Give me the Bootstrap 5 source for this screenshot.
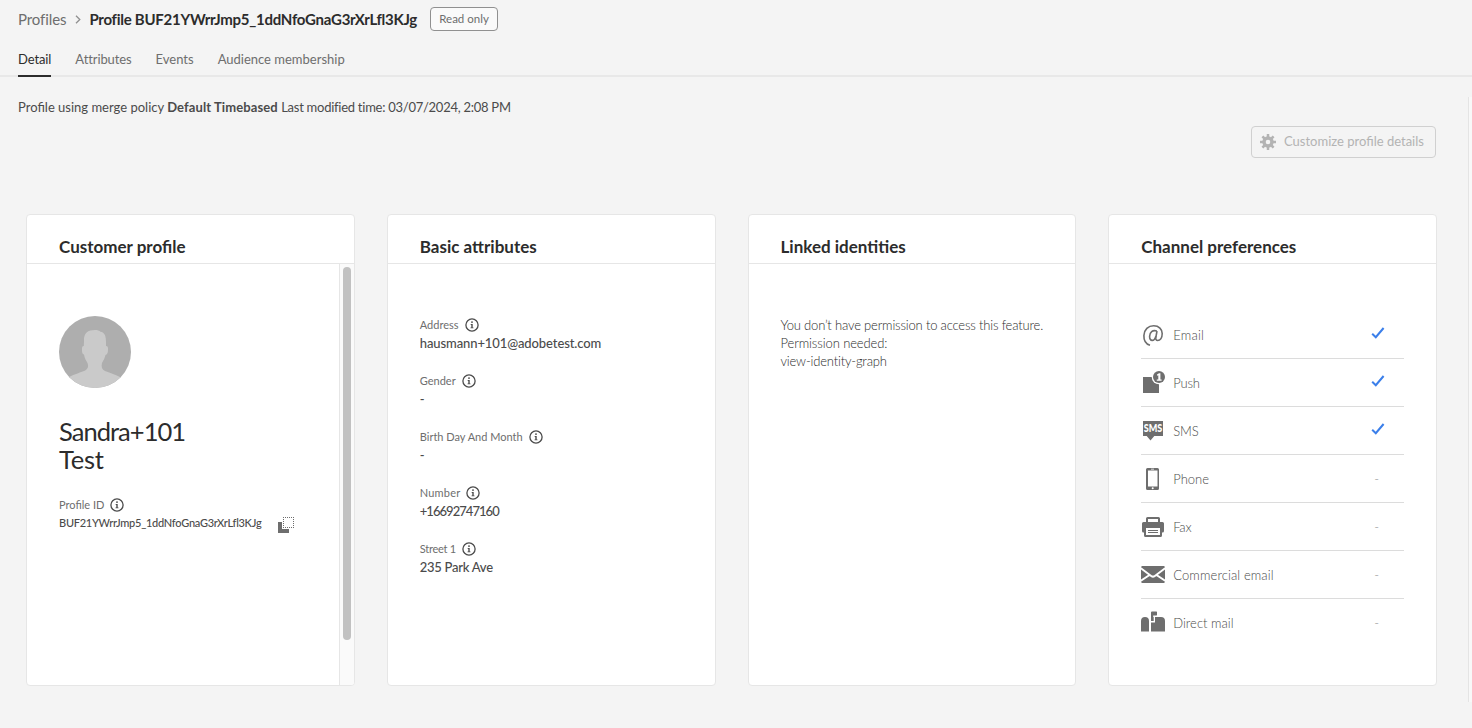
<!DOCTYPE html>
<html lang="en">
<head>
<meta charset="utf-8">
<meta name="viewport" content="width=device-width, initial-scale=1">
<title>Profile detail</title>
<link href="https://cdn.jsdelivr.net/npm/bootstrap@5.3.0/dist/css/bootstrap.min.css" rel="stylesheet">
<style>
body{background:#f4f4f4;color:#4b4b4b;font:400 13px/18px Lato,"Open Sans",sans-serif;height:728px;overflow:hidden}
svg{display:block;flex:none}
/* tracking */
.k-10{letter-spacing:-.96px}.k-6{letter-spacing:-.64px}.k-3{letter-spacing:-.26px}.k-2{letter-spacing:-.18px}.k-1{letter-spacing:-.1px}.k1{letter-spacing:.1px}.k2{letter-spacing:.2px}
.page-head{height:38px;padding-left:18px;font-size:15px}
.page-head a{color:#6e6e6e;text-decoration:none}
.page-head h1{font-size:15px;font-weight:700;line-height:20px;color:#2c2c2c;margin:0 13px 0 8px}
.crumb-sep{margin-left:9px}
.ro-tag{height:24px;width:68px;border:1px solid #909090;border-radius:4px;background:#fafafa;color:#6e6e6e;font-size:11.5px}
.tabs{height:39px;padding-left:18px;gap:24px;border-bottom:2px solid #e8e8e8}
.tabs .nav-link{padding:12px 0 0;height:39px;color:#6e6e6e;line-height:18px}
.tabs .nav-link.active{color:#2c2c2c;border-bottom:2px solid #2c2c2c}
.content{height:605px;margin-top:20px;width:1469px;border-right:1px solid #e4e4e4;padding:1px 31px 0 18px}
.side-fill{background:#f8f8f8;height:605px;margin-top:20px}
.actions{margin:10px 1px 0 0}
.btn-cust{--bs-btn-disabled-opacity:1;--bs-btn-disabled-color:#b3b3b3;--bs-btn-disabled-border-color:#d0d0d0;width:185px;height:32px;padding:0 8px;border-radius:4px;font-size:13px;gap:8px}
.cards{display:grid;grid-template-columns:repeat(4,1fr);gap:32px;margin:56px 0 0 8px}
.pcard{height:472px;border:1px solid #e6e6e6;border-radius:4px;background:#fff;overflow:hidden}
.pcard h2{font-size:17px;font-weight:700;line-height:20px;color:#2c2c2c;margin:0;height:49px;padding:22px 0 0 32px;border-bottom:1px solid #e6e6e6}
.pbody{padding:52px 32px 0;height:421px}
.fullname{font-size:25.5px;line-height:28px;color:#2c2c2c;margin-top:29px}
.lbl{font-size:11px;color:#6e6e6e;gap:6px}
.pid-label{margin-top:23px}
.pid{font-size:11px;font-weight:500}
.copy-ic{margin:3px 13px 0 0}
.track{width:15px;border-left:1px solid #e6e6e6;background:#fafafa;padding:3px 3px 0}
.thumb{width:8px;height:373px;border-radius:4px;background:#c1c1c1}
.field{height:56px}
.value{font-weight:500}
.notice{font-weight:300;color:#2c2c2c}
.prefs{padding-top:47px}
.pref{height:48px;border-bottom:1px solid #dcdcdc;font-weight:300;color:#4b4b4b}
.pref:last-child{border-bottom:0}
.pref svg.ic{margin-right:8px}
.no{color:#8e8e8e;margin-right:25px}
.yes{margin:-4px 19px 0 0}
</style>
</head>
<body>
<svg width="0" height="0" class="d-none">
<symbol id="info" viewBox="0 0 14 14"><circle cx="7" cy="7" r="6.1" fill="none" stroke="#4b4b4b" stroke-width="1.3"/><circle cx="7" cy="4.1" r=".95" fill="#4b4b4b"/><path d="M5.700 6h2v3.400h.8v.9H5.500v-.9h.8V6.900h-.6z" fill="#4b4b4b"/></symbol>
<symbol id="check" viewBox="0 0 14 14"><path d="M1.200 7.700 4.800 11.200 12.600 2" fill="none" stroke="#3b7fea" stroke-width="2"/></symbol>
</svg>
<header class="page-head d-flex align-items-center">
<a href="#" class="k-1">Profiles</a>
<svg class="crumb-sep" width="6" height="9" viewBox="0 0 6 9" fill="none" stroke="#909090" stroke-width="1.3"><path d="M1 .7 4.800 4.500 1 8.300"/></svg>
<h1 class="k-3">Profile BUF21YWrrJmp5_1ddNfoGnaG3rXrLfl3KJg</h1>
<span class="ro-tag d-flex align-items-center justify-content-center">Read only</span>
</header>
<nav class="tabs nav flex-nowrap">
<a class="nav-link active k-1" href="#">Detail</a><a class="nav-link k-1" href="#">Attributes</a><a class="nav-link" href="#">Events</a><a class="nav-link" href="#">Audience membership</a>
</nav>
<div class="d-flex">
<main class="content">
<p class="mb-0">Profile using merge policy <b class="k1">Default Timebased</b> <span class="k-3">Last modified time: 03/07/2024, 2:08 PM</span></p>
<div class="actions d-flex justify-content-end">
<button class="btn btn-cust d-flex align-items-center" disabled>
<svg width="16" height="16" viewBox="-8 -8 16 16" fill="none" stroke="#b3b3b3"><circle r="4" stroke-width="3.4"/><path stroke-width="2.5" d="M0-8v3M0 8V5M-8 0h3M8 0H5M-5.600-5.600-3.500-3.500M5.600 5.600 3.500 3.500M5.600-5.600 3.500-3.500M-5.600 5.600-3.500 3.500"/></svg>
<span class="text-nowrap">Customize profile details</span></button>
</div>
<section class="cards">
<article class="pcard">
<h2>Customer profile</h2>
<div class="d-flex">
<div class="pbody flex-grow-1">
<svg width="72" height="72" viewBox="0 0 72 72"><defs><clipPath id="round"><circle cx="36" cy="36" r="36"/></clipPath></defs><g clip-path="url(#round)"><path fill="#aeaeae" d="M0 0h72v72H0z"/><path fill="#cacaca" d="M25 25C24.500 17 29 14 36 14c2.500 0 4.500.6 5.500 1.800C45.500 16.200 47.400 20 47 28v2c2 0 2 1 2 4s-1 4.500-2.500 5C45.500 43 44.500 44 43 47c-1 4 0 6.500 3 8 6 2.400 10 3.500 16 6.500V72H10V61c6-3 10-4 15-6 3.500-1.500 5-4 3.500-8-1.500-3-3-4.500-3.500-8.500C23.300 38 23 36.500 23 34s0-4 1.800-4z"/></g></svg>
<div class="fullname"><div class="k-10">Sandra+101</div><div class="k-3">Test</div></div>
<div class="lbl pid-label d-flex align-items-center"><span>Profile ID</span><svg width="14" height="14"><use href="#info"/></svg></div>
<div class="d-flex"><span class="pid k-3">BUF21YWrrJmp5_1ddNfoGnaG3rXrLfl3KJg</span>
<svg class="copy-ic ms-auto" width="16" height="16" viewBox="0 0 16 16"><path fill="#6e6e6e" d="M0 5h4v7h7v4H0z"/><path fill="none" stroke="#6e6e6e" stroke-dasharray="1 1" d="M5 .5h11M5 10.500h11M5.500 0v11M15.500 0v11"/></svg></div>
</div>
<div class="track"><div class="thumb"></div></div>
</div>
</article>
<article class="pcard">
<h2>Basic attributes</h2>
<div class="pbody">
<div class="field"><div class="lbl d-flex align-items-center"><span>Address</span><svg width="14" height="14"><use href="#info"/></svg></div><div class="value k-1">hausmann+101@adobetest.com</div></div>
<div class="field"><div class="lbl d-flex align-items-center"><span>Gender</span><svg width="14" height="14"><use href="#info"/></svg></div><div class="value">-</div></div>
<div class="field"><div class="lbl d-flex align-items-center"><span>Birth Day And Month</span><svg width="14" height="14"><use href="#info"/></svg></div><div class="value">-</div></div>
<div class="field"><div class="lbl d-flex align-items-center"><span class="k2">Number</span><svg width="14" height="14"><use href="#info"/></svg></div><div class="value k-10">+16692747160</div></div>
<div class="field"><div class="lbl d-flex align-items-center"><span class="k-3">Street 1</span><svg width="14" height="14"><use href="#info"/></svg></div><div class="value k-3">235 Park Ave</div></div>
</div>
</article>
<article class="pcard">
<h2>Linked identities</h2>
<div class="pbody notice text-nowrap"><div class="k-2">You don’t have permission to access this feature.</div><div class="k-1">Permission needed:</div><div class="k-2">view-identity-graph</div></div>
</article>
<article class="pcard">
<h2>Channel preferences</h2>
<div class="pbody prefs">
<div class="pref d-flex align-items-center"><svg class="ic" width="24" height="24" viewBox="0 0 24 24" fill="none" stroke="#6e6e6e"><path stroke-width="1.6" d="M9 22.300C4.800 21 2.700 17 2.900 12.500 3.200 6.500 7.200 2.800 12.700 2.800 18 2.800 21.200 6.200 21.200 10.600c0 4.400-2.200 6.900-4.500 6.900-1.600 0-2.200-1.200-1.900-2.800L16 8"/><path stroke-width="1.6" d="M15.800 8c-4.300-1.400-7 1.300-7.200 5.200-.1 2.500.9 4.200 2.600 4.200 1.800 0 3-1.800 3.700-4.200"/></svg><span class="k2 me-auto">Email</span><svg class="yes" width="14" height="14"><use href="#check"/></svg></div>
<div class="pref d-flex align-items-center"><svg class="ic" width="24" height="24" viewBox="0 0 24 24"><path fill="#6e6e6e" d="M2 6h16v16H2z"/><circle cx="18" cy="6" r="7.300" fill="#fff"/><circle cx="18" cy="6" r="6" fill="#6e6e6e"/><path fill="#fff" d="M16 3.400 18 2.200h1.400v6.200h1.200v1.300H15.800V8.400h1.500V4.300L16 4.700z"/></svg><span class="k-2 me-auto">Push</span><svg class="yes" width="14" height="14"><use href="#check"/></svg></div>
<div class="pref d-flex align-items-center"><svg class="ic" width="24" height="24" viewBox="0 0 24 24"><path fill="#6e6e6e" d="M2 2h20v15h-8.700L9.500 21.500 5.700 17H2z"/><text x="12" y="13" text-anchor="middle" textLength="18.500" lengthAdjust="spacingAndGlyphs" font-size="10.500" font-weight="900" fill="#fff">SMS</text></svg><span class="k-2 me-auto">SMS</span><svg class="yes" width="14" height="14"><use href="#check"/></svg></div>
<div class="pref d-flex align-items-center"><svg class="ic" width="24" height="24" viewBox="0 0 24 24"><path fill="#6e6e6e" fill-rule="evenodd" d="M7 1h9.500A1.500 1.500 0 0 1 18 2.500v19a1.500 1.500 0 0 1-1.500 1.500h-10A1.500 1.500 0 0 1 5 21.500v-19A1.500 1.500 0 0 1 6.500 1zM7 3.500v16h9.500v-16zM10 1.800v.8h3v-.8zm1.700 18.500a1 1 0 1 0 .01 2 1 1 0 0 0 0-2z"/></svg><span class="me-auto">Phone</span><span class="no">-</span></div>
<div class="pref d-flex align-items-center"><svg class="ic" width="24" height="24" viewBox="0 0 24 24"><path fill="#6e6e6e" fill-rule="evenodd" d="M5 7V3.500Q5 2 6.500 2h11Q19 2 19 3.500V7h2.500Q23 7 23 8.500V16q0 1.500-1.500 1.500H21v3q0 1.500-1.500 1.500h-15Q3 22 3 20.500v-3h-.5Q1 17.500 1 16V8.500Q1 7 2.500 7zM7 4v3h10V4zM5 13v7h14v-7z"/><path stroke="#6e6e6e" d="M7 15.500h10M7 17.500h10"/></svg><span class="k-3 me-auto">Fax</span><span class="no">-</span></div>
<div class="pref d-flex align-items-center"><svg class="ic" width="24" height="24" viewBox="0 0 24 24"><path fill="#6e6e6e" d="M1 3h22l1 1v15l-1 1H1l-1-1V4z"/><path fill="none" stroke="#fff" stroke-width="2" d="M-.5 5 10.500 13.200q1.500 1 3 0L24.500 5M-.5 18l9-6M24.500 18l-9-6"/></svg><span class="k1 me-auto">Commercial email</span><span class="no">-</span></div>
<div class="pref d-flex align-items-center"><svg class="ic" width="24" height="24" viewBox="0 0 24 24"><path fill="#6e6e6e" d="M0 10q0-4 4-4t4 4v10.500H0zM10 6.500 11 6h9q4 0 4 4v10.500H10z"/><path fill="none" stroke="#fff" stroke-width="1.400" d="M9 10.700h4.300V5"/><path fill="#6e6e6e" d="M10 10V1.500Q10 .5 11 .5h4.500l.5.500v3l-.5.500h-3.300V10z"/></svg><span class="me-auto">Direct mail</span><span class="no">-</span></div>
</div>
</article>
</section>
</main>
<div class="side-fill flex-grow-1"></div>
</div>
<script src="https://cdn.jsdelivr.net/npm/bootstrap@5.3.0/dist/js/bootstrap.bundle.min.js"></script>
</body>
</html>
